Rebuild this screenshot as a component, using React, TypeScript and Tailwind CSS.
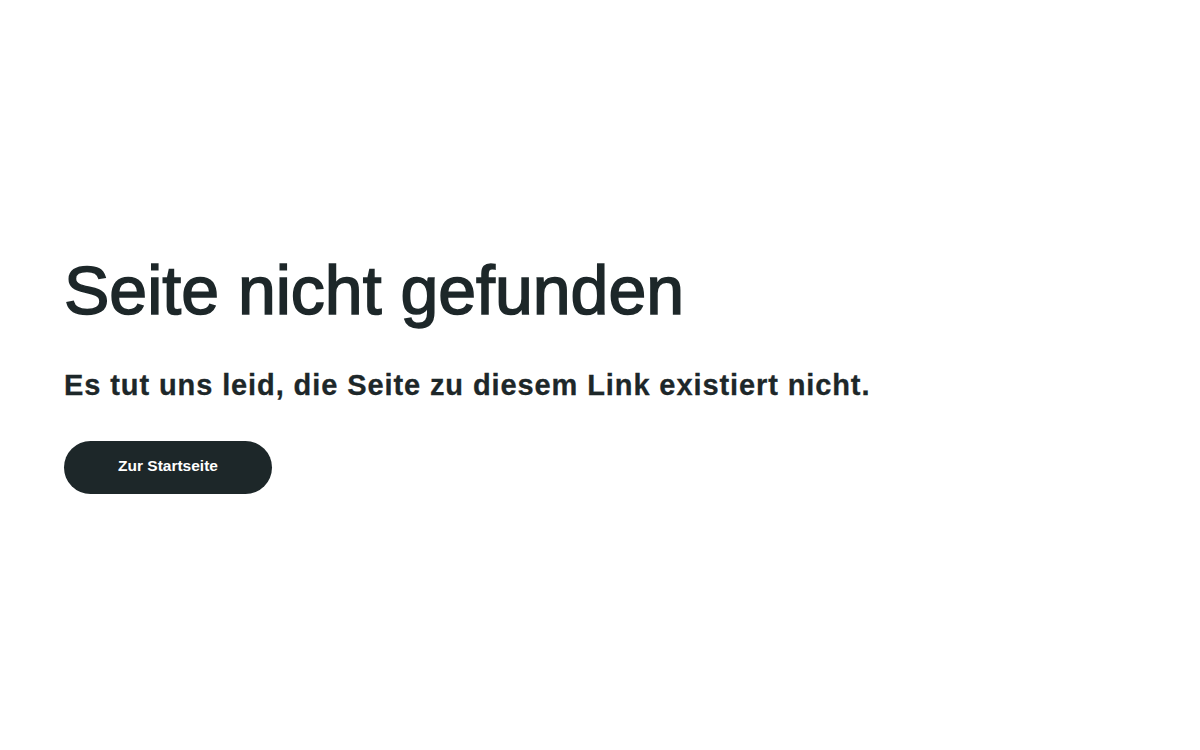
export default function App() {
  return (
    <div className="flex h-[750px] w-[1200px] flex-col bg-white px-16 pt-[250px] font-['Liberation_Sans',Arial,sans-serif] text-[#1d2729]">
      <h1 className="text-[68px] leading-[80px] font-normal [-webkit-text-stroke:1.6px_#1d2729]">
        Seite nicht gefunden
      </h1>
      <p className="mt-[37px] text-[29px] leading-[36px] font-bold tracking-[0.9px] [-webkit-text-stroke:0.3px_#1d2729]">
        Es tut uns leid, die Seite zu diesem Link existiert nicht.
      </p>
      <div className="mt-[38px]">
        <a
          href="#"
          className="inline-flex h-[53px] w-[208px] items-center justify-center rounded-full bg-[#1d2729] pb-[4px] text-[15.5px] font-bold text-white"
        >
          Zur Startseite
        </a>
      </div>
    </div>
  );
}
